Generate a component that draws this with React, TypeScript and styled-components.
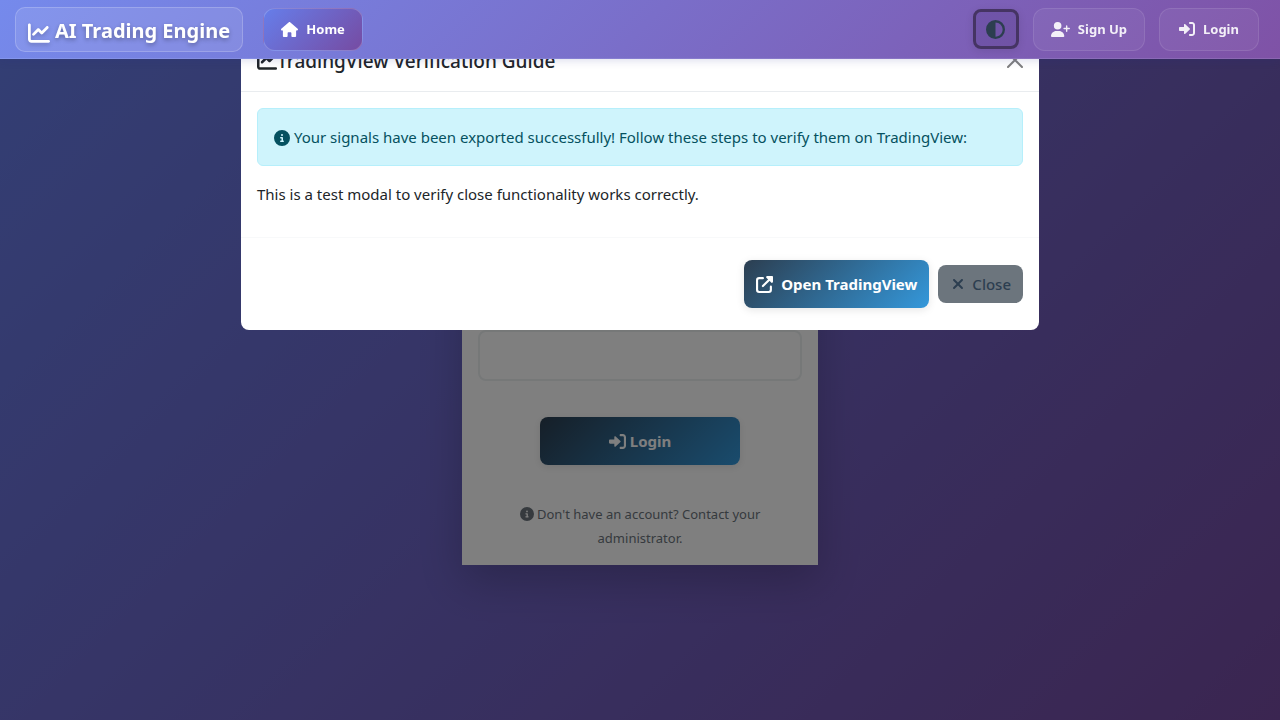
import React from "react";
import styled, { createGlobalStyle, css } from "styled-components";
import {
  FaChartLine, FaHouse, FaCircleHalfStroke, FaUserPlus, FaCircleInfo, FaXmark,
} from "react-icons/fa6";

const GlobalStyle = createGlobalStyle`
  *, *::before, *::after { box-sizing: border-box; }
  body {
    margin: 0;
    min-height: 100vh;
    background: linear-gradient(135deg, #667eea 0%, #764ba2 100%) fixed;
    color: #212529;
    font-family: "Segoe UI", "Noto Sans", sans-serif;
    font-size: 15px;
    line-height: 24px;
  }
  button, input { font: inherit; }
  svg { flex: none; }
`;

const Navbar = styled.nav`
  position: sticky;
  top: 0;
  z-index: 30;
  display: flex;
  align-items: center;
  height: 59px;
  padding: 0 21px 0 15px;
  background: linear-gradient(135deg, #758aec 0%, #7f52a6 100%);
  border-bottom: 1px solid rgba(255, 255, 255, 0.1);
  box-shadow: 0 2px 8px rgba(31, 38, 135, 0.15);
`;

const Brand = styled.a`
  display: flex;
  align-items: center;
  gap: 5px;
  height: 45px;
  padding: 3px 12px 0;
  margin-right: 20px;
  border: 1px solid rgba(255, 255, 255, 0.2);
  border-radius: 10px;
  background: rgba(255, 255, 255, 0.1);
  color: #fff;
  font-size: 20px;
  font-weight: 700;
  text-decoration: none;
  text-shadow: 0 2px 4px rgba(0, 0, 0, 0.3);
  svg { margin-top: 4px; filter: drop-shadow(0 2px 2px rgba(0, 0, 0, 0.2)); }
`;

const NavLink = styled.a<{ $active?: boolean }>`
  display: flex;
  align-items: center;
  justify-content: center;
  gap: 8px;
  min-width: 100px;
  height: 43px;
  padding: 0 17px;
  border: 1px solid rgba(255, 255, 255, 0.1);
  border-radius: 12px;
  background: rgba(255, 255, 255, 0.05);
  color: rgba(255, 255, 255, 0.9);
  font-size: 13px;
  font-weight: 700;
  text-decoration: none;
  ${(p) => p.$active && css`
    color: #fff;
    border-color: rgba(255, 255, 255, 0.2);
    background: linear-gradient(135deg, #667eea 0%, #764ba2 100%);
  `}
`;

const NavEnd = styled.div`
  display: flex;
  align-items: center;
  gap: 14px;
  margin-left: auto;
`;

const ThemeToggle = styled.button`
  display: grid;
  place-items: center;
  width: 46px;
  height: 40px;
  padding: 0;
  border: 3px solid #453463;
  border-radius: 8px;
  background: rgba(60, 40, 110, 0.2);
  box-shadow: 0 2px 8px rgba(0, 0, 0, 0.1);
  color: #2c3e50;
`;

const Main = styled.main`
  display: flex;
  justify-content: center;
  padding: 41px 16px;
`;

const LoginCard = styled.form`
  display: flex;
  flex-direction: column;
  align-items: center;
  width: 100%;
  max-width: 356px;
  padding: 230px 16px 15px;
  background: #fff;
  box-shadow: 0 16px 40px rgba(0, 0, 0, 0.2);
`;

const Field = styled.input`
  width: 100%;
  height: 51px;
  padding: 12px 16px;
  border: 2px solid #ecf0f1;
  border-radius: 8px;
  background: #fff;
`;

const PrimaryButton = styled.button<{ $wide?: boolean }>`
  display: flex;
  align-items: center;
  justify-content: center;
  gap: ${(p) => (p.$wide ? 4 : 8)}px;
  width: ${(p) => (p.$wide ? "200px" : "auto")};
  height: 48px;
  padding: 0 12px;
  border: 0;
  border-radius: 8px;
  background: linear-gradient(135deg, #2c3e50 0%, #3498db 100%);
  box-shadow: 0 2px 8px rgba(0, 0, 0, 0.1);
  color: #fff;
  font-weight: 700;
`;

const LoginButton = styled(PrimaryButton)`
  margin: 36px 0 37px;
`;

const Note = styled.p`
  margin: 0;
  padding: 0 32px;
  color: #6c757d;
  font-size: 13px;
  text-align: center;
  svg { vertical-align: -2px; }
`;

const Backdrop = styled.div`
  position: fixed;
  inset: 0;
  z-index: 10;
  padding: 28px 16px;
  background: rgba(0, 0, 0, 0.5);
`;

const Dialog = styled.div`
  max-width: 798px;
  margin: 0 auto;
  border-radius: 8px;
  background: #fff;
`;

const DialogHeader = styled.header`
  display: flex;
  align-items: center;
  justify-content: space-between;
  height: 64px;
  padding: 0 16px;
  border-bottom: 1px solid #e9ecef;
`;

const DialogTitle = styled.h2`
  display: flex;
  align-items: center;
  margin: 0;
  padding-top: 2px;
  font-size: 19px;
  font-weight: 500;
`;

const CloseIcon = styled.button`
  display: grid;
  padding: 0;
  border: 0;
  background: none;
  color: #7f7f7f;
`;

const DialogBody = styled.div`
  padding: 16px 16px 31px;
  p { margin: 0; }
`;

const Alert = styled.div`
  padding: 16px;
  margin-bottom: 16px;
  border: 1px solid #b6effb;
  border-radius: 6px;
  background: #cff4fc;
  color: #055160;
  svg { vertical-align: -3px; }
`;

const DialogFooter = styled.footer`
  display: flex;
  align-items: center;
  justify-content: flex-end;
  gap: 9px;
  padding: 22px 16px;
  border-top: 1px solid #f8f9fa;
`;

const SecondaryButton = styled.button`
  display: flex;
  align-items: center;
  gap: 6px;
  height: 38px;
  padding: 0 12px;
  border: 0;
  border-radius: 8px;
  background: #6c757d;
  color: #2c3e50;
  font-weight: 500;
`;

const SignInIcon = ({ size }: { size: number }) => (
  <svg width={size} height={size} viewBox="0 0 512 512" fill="currentColor" aria-hidden="true">
    <path d="M344.7 238.5l-144.1-136C193.7 95.97 183.4 94.17 174.6 97.95C165.8 101.8 160.1 110.4 160.1 120V192H32.02C14.33 192 0 206.3 0 224v64c0 17.68 14.33 32 32.02 32h128.1v72c0 9.578 5.707 18.25 14.51 22.05c8.803 3.781 19.03 1.984 26-4.594l144.1-136C354.3 264.6 354.3 247.4 344.7 238.5zM416 32h-64c-17.67 0-32 14.33-32 32s14.33 32 32 32h64c17.67 0 32 14.33 32 32v256c0 17.67-14.33 32-32 32h-64c-17.67 0-32 14.33-32 32s14.33 32 32 32h64c53.02 0 96-42.98 96-96V128C512 74.98 469 32 416 32z" />
  </svg>
);

const ExternalIcon = ({ size }: { size: number }) => (
  <svg width={size} height={size} viewBox="0 0 512 512" fill="none" stroke="currentColor" aria-hidden="true">
    <path strokeWidth="64" strokeLinecap="round" strokeLinejoin="round" d="M208 64H96a64 64 0 0 0-64 64V416a64 64 0 0 0 64 64H384a64 64 0 0 0 64-64V320M208 304L400 112" />
    <path fill="currentColor" stroke="none" d="M488 0H336c-13 0-25 8-30 20c-5 12-2 26 7 35L457 199c9 9 23 12 35 7c12-5 20-17 20-30V24C512 11 501 0 488 0z" />
  </svg>
);

export default function App() {
  return (
    <>
      <GlobalStyle />
      <Navbar>
        <Brand href="#"><FaChartLine size={22} />AI Trading Engine</Brand>
        <NavLink href="#" $active><FaHouse size={17} />Home</NavLink>
        <NavEnd>
          <ThemeToggle type="button" aria-label="Toggle contrast"><FaCircleHalfStroke size={19} /></ThemeToggle>
          <NavLink href="#"><FaUserPlus size={19} />Sign Up</NavLink>
          <NavLink href="#"><SignInIcon size={16} />Login</NavLink>
        </NavEnd>
      </Navbar>
      <Main>
        <LoginCard>
          <Field type="password" aria-label="Password" />
          <LoginButton type="submit" $wide><SignInIcon size={17} />Login</LoginButton>
          <Note><FaCircleInfo size={14} /> Don't have an account? Contact your administrator.</Note>
        </LoginCard>
      </Main>
      <Backdrop>
        <Dialog role="dialog" aria-labelledby="guide-title">
          <DialogHeader>
            <DialogTitle id="guide-title"><FaChartLine size={20} />TradingView Verification Guide</DialogTitle>
            <CloseIcon type="button" aria-label="Close">
              <svg width="16" height="16" viewBox="0 0 16 16" fill="none" stroke="currentColor" strokeWidth="2" strokeLinecap="round">
                <path d="M1 1l14 14M15 1L1 15" />
              </svg>
            </CloseIcon>
          </DialogHeader>
          <DialogBody>
            <Alert>
              <FaCircleInfo size={16} /> Your signals have been exported successfully! Follow these steps to verify them on TradingView:
            </Alert>
            <p>This is a test modal to verify close functionality works correctly.</p>
          </DialogBody>
          <DialogFooter>
            <PrimaryButton type="button"><ExternalIcon size={17} />Open TradingView</PrimaryButton>
            <SecondaryButton type="button"><FaXmark size={16} />Close</SecondaryButton>
          </DialogFooter>
        </Dialog>
      </Backdrop>
    </>
  );
}
